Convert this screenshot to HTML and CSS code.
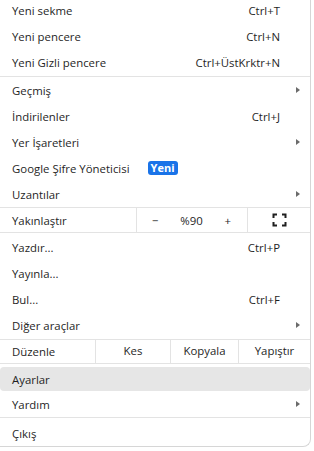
FILE: index.html
```html
<!DOCTYPE html>
<html lang="tr">
<head>
  <meta charset="UTF-8" />
  <meta name="viewport" content="width=device-width, initial-scale=1.0"/>
  <title>Menü</title>
  <link rel="stylesheet" href="styles.css">
</head>
<body>
  <div class="menu">
    <div class="group first">
      <div class="item"><span class="label">Yeni sekme</span><span class="key">Ctrl+T</span><span class="tail"></span></div>
      <div class="item"><span class="label">Yeni pencere</span><span class="key">Ctrl+N</span><span class="tail"></span></div>
      <div class="item"><span class="label">Yeni Gizli pencere</span><span class="key">Ctrl+ÜstKrktr+N</span><span class="tail"></span></div>
    </div>
    <div class="group">
      <div class="item"><span class="label">Geçmiş</span><span class="tail"><i class="arrow"></i></span></div>
      <div class="item"><span class="label">İndirilenler</span><span class="key">Ctrl+J</span><span class="tail"></span></div>
      <div class="item"><span class="label">Yer İşaretleri</span><span class="tail"><i class="arrow"></i></span></div>
      <div class="item"><span class="label">Google Şifre Yöneticisi <b class="badge">Yeni</b></span><span class="tail"></span></div>
      <div class="item"><span class="label">Uzantılar</span><span class="tail"><i class="arrow"></i></span></div>
    </div>
    <div class="group split zoom">
      <span class="label">Yakınlaştır</span>
      <div class="zoom-ctrl">
        <span>−</span>
        <span class="zoom-val">%90</span>
        <span>+</span>
      </div>
      <div class="cell full">
        <svg width="15" height="14" viewBox="0 0 15 14">
          <path d="M1.5 5V1.5H5M10 1.5h3.5V5M13.5 9v3.5H10M5 12.5H1.5V9" fill="none" stroke="#1f1f1f" stroke-width="2"/>
        </svg>
      </div>
    </div>
    <div class="group tools">
      <div class="item"><span class="label">Yazdır...</span><span class="key">Ctrl+P</span><span class="tail"></span></div>
      <div class="item"><span class="label">Yayınla...</span><span class="tail"></span></div>
      <div class="item"><span class="label">Bul...</span><span class="key">Ctrl+F</span><span class="tail"></span></div>
      <div class="item"><span class="label">Diğer araçlar</span><span class="tail"><i class="arrow"></i></span></div>
    </div>
    <div class="group split edit">
      <span class="label">Düzenle</span>
      <div class="cell cut">Kes</div>
      <div class="cell copy">Kopyala</div>
      <div class="cell paste">Yapıştır</div>
    </div>
    <div class="group settings">
      <div class="item active"><span class="label">Ayarlar</span><span class="tail"></span></div>
      <div class="item"><span class="label">Yardım</span><span class="tail"><i class="arrow"></i></span></div>
    </div>
    <div class="group last">
      <div class="item"><span class="label">Çıkış</span><span class="tail"></span></div>
    </div>
  </div>
</body>
</html>
```

FILE: styles.css
```css
body {
  margin: 0;
  background: #fff;
  font-family: 'Open Sans', 'Noto Sans', sans-serif;
  font-size: 11.4px;
  color: #1f1f1f;
}
.menu {
  width: 310px;
  margin-top: -3px;
  background: #fff;
  border-right: 1px solid #d6d6d6;
  border-bottom: 1px solid #d6d6d6;
  border-bottom-right-radius: 8px;
}
.group {
  border-bottom: 1px solid #e3e3e3;
}
.group.first {
  padding-bottom: 1px;
}
.group.last {
  border-bottom: none;
}
.item {
  display: flex;
  align-items: center;
  height: 26px;
  padding-left: 12px;
}
.item .label {
  flex: 1;
  display: flex;
  align-items: center;
}
.key {
  text-align: right;
}
.tail {
  width: 30px;
  display: flex;
  align-items: center;
  padding-left: 16px;
  box-sizing: border-box;
}
.arrow {
  width: 0;
  height: 0;
  border-top: 3.5px solid transparent;
  border-bottom: 3.5px solid transparent;
  border-left: 4px solid #6b6b6b;
}
.badge {
  background: #1a73e8;
  color: #fff;
  font-weight: bold;
  font-size: 11px;
  line-height: 14px;
  height: 14px;
  padding: 0 3px;
  border-radius: 3px;
  margin-left: 18px;
}
.split {
  display: flex;
  align-items: center;
  height: 24px;
}
.split .label {
  padding-left: 12px;
}
.zoom .label {
  width: 124px;
}
.zoom-ctrl {
  width: 112px;
  height: 100%;
  box-sizing: border-box;
  border-left: 1px solid #e3e3e3;
  border-right: 1px solid #e3e3e3;
  display: flex;
  align-items: center;
  justify-content: space-between;
  padding: 0 16px 0 15px;
}
.cell {
  height: 100%;
  display: flex;
  align-items: center;
  justify-content: center;
}
.full {
  flex: 1;
}
.tools {
  padding: 1px 0;
}
.edit {
  height: 23px;
}
.edit .label {
  width: 83px;
}
.edit .cell {
  border-left: 1px solid #e3e3e3;
  box-sizing: border-box;
  padding-bottom: 2px;
}
.cut { width: 75px; }
.copy { width: 68px; }
.paste { flex: 1; }
.settings {
  padding-top: 3px;
}
.item.active {
  height: 24px;
  background: #e6e6e6;
  border-radius: 4px;
}
.last .item {
  height: 28px;
  padding-top: 3px;
  box-sizing: border-box;
}
```
